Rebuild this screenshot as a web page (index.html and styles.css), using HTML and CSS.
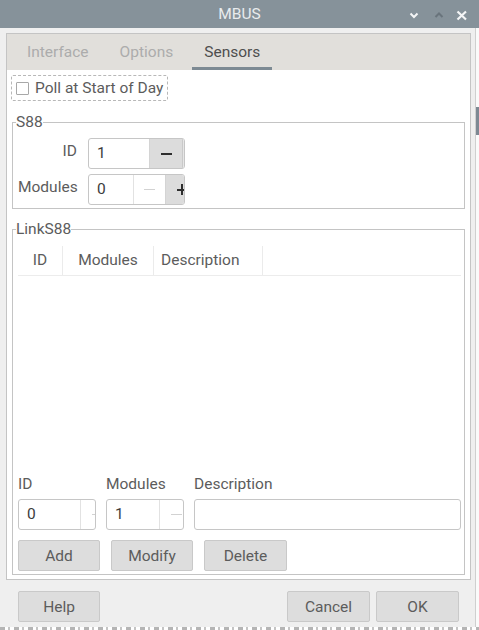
FILE: index.html
```html
<!DOCTYPE html>
<html>
<head>
<meta charset="utf-8">
<link rel="stylesheet" href="styles.css">
</head>
<body>
<div class="titlebar">
  <span></span>
  <span class="title">MBUS</span>
  <svg class="wm" width="79" height="28" viewBox="0 0 79 28">
    <path d="M10.5 13.5 l3.5 3.5 l3.5 -3.5" fill="none" stroke="#f4f5f6" stroke-width="2"/>
    <path d="M35.5 17 l3.5 -3.5 l3.5 3.5" fill="none" stroke="#69747c" stroke-width="2"/>
    <path d="M57.5 11.5 l8.5 8 M66 11.5 l-8.5 8" fill="none" stroke="#f4f5f6" stroke-width="2.2"/>
  </svg>
</div>
<div class="main">
  <div class="dialog">
    <div class="notebook">
      <div class="tabs">
        <div class="tab">Interface</div>
        <div class="tab">Options</div>
        <div class="tab active">Sensors</div>
      </div>
      <div class="page">
        <label class="check"><span class="box"></span>Poll at Start of Day</label>
        <div class="group s88">
          <span class="gtitle">S88</span>
          <div class="form">
            <span class="lbl">ID</span>
            <div class="spin">
              <span class="val w61">1</span>
              <span class="btn on"><i class="minus"></i></span>
              <span class="btn stub"></span>
            </div>
            <span class="lbl">Modules</span>
            <div class="spin">
              <span class="val w45">0</span>
              <span class="btn off w32"><i class="minus"></i></span>
              <span class="btn on"><i class="plus"></i></span>
            </div>
          </div>
        </div>
        <div class="group link">
          <span class="gtitle">LinkS88</span>
          <div class="table">
            <div class="thead">
              <div class="th c1">ID</div>
              <div class="th c2">Modules</div>
              <div class="th c3">Description</div>
            </div>
            <div class="tbody"></div>
          </div>
          <div class="fields">
            <span class="flbl">ID</span>
            <span class="flbl">Modules</span>
            <span class="flbl">Description</span>
            <div class="spin">
              <span class="val w62">0</span>
              <span class="btn off"><i class="minus"></i></span>
            </div>
            <div class="spin">
              <span class="val w53">1</span>
              <span class="btn off"><i class="minus"></i></span>
            </div>
            <div class="entry"></div>
          </div>
          <div class="actions">
            <button class="pbtn w82">Add</button>
            <button class="pbtn w82">Modify</button>
            <button class="pbtn w83">Delete</button>
          </div>
        </div>
      </div>
    </div>
    <div class="footer">
      <button class="pbtn w82">Help</button>
      <span class="spacer"></span>
      <button class="pbtn w83">Cancel</button>
      <button class="pbtn w83">OK</button>
    </div>
  </div>
  <div class="side"></div>
</div>
<div class="bottom"></div>
</body>
</html>
```
FILE: styles.css
```css
* { box-sizing: border-box; }
html, body { margin: 0; padding: 0; }
body {
  width: 479px;
  height: 630px;
  overflow: hidden;
  background: #ffffff;
  font-family: Roboto, "Liberation Sans", sans-serif;
  font-size: 15.5px;
  color: #5c5c5c;
}
.titlebar {
  height: 28px;
  background: #86929a;
  display: grid;
  grid-template-columns: 1fr auto 1fr;
  align-items: center;
}
.title {
  color: #e8ebed;
  line-height: 28px;
  font-size: 15.5px;
}
.wm { justify-self: end; display: block; }
.main {
  height: 599px;
  display: flex;
}
.dialog {
  width: 476px;
  background: #efefef;
  border-right: 1px solid #cfcfcf;
  padding: 5px 0 0 6px;
  display: flex;
  flex-direction: column;
}
.side {
  flex: 1;
  background: linear-gradient(to bottom, #fafafa 0 79px, #7d8993 79px 107px, #fafafa 107px);
}
.bottom {
  height: 3px;
  background: repeating-linear-gradient(90deg, #6a6a6a 0 5px, #ffffff 5px 8px, #8a8a8a 8px 10px, #ffffff 10px 14px);
  opacity: 0.5;
}
.notebook {
  width: 465px;
  height: 547px;
  border: 1px solid #c4c4c4;
  display: flex;
  flex-direction: column;
}
.tabs {
  height: 36px;
  background: #e1dfdb;
  display: flex;
  padding-left: 8px;
  gap: 7px;
}
.tab {
  padding: 0 12px;
  line-height: 36px;
  color: #acacac;
}
.tab.active {
  color: #4e4e4e;
  box-shadow: inset 0 -3px 0 #7d8a93;
}
.page {
  flex: 1;
  background: #ffffff;
  padding: 5px 5px 4px 5px;
  display: flex;
  flex-direction: column;
  align-items: stretch;
}
.check {
  align-self: flex-start;
  margin-left: -1px;
  height: 26px;
  display: inline-flex;
  align-items: center;
  padding: 0 4px;
  border: 1px dashed #b8b8b8;
  border-radius: 2px;
}
.box {
  width: 13px;
  height: 13px;
  border: 1px solid #a8a8a8;
  border-radius: 1px;
  background: #fff;
  margin-right: 6px;
}
.group {
  position: relative;
  border: 1px solid #c4c4c4;
}
.gtitle {
  position: absolute;
  left: 3px;
  top: -10px;
  line-height: 19px;
  background: #ffffff;
}
.s88 {
  margin-top: 21px;
  padding: 15px 0 3px 5px;
}
.form {
  display: grid;
  grid-template-columns: 59px 97px;
  column-gap: 11px;
  row-gap: 5px;
}
.lbl {
  text-align: right;
  line-height: 18px;
  padding-top: 4px;
}
.spin {
  display: flex;
  height: 31px;
  border: 1px solid #c6c6c6;
  border-radius: 3px;
  overflow: hidden;
  background: #fff;
}
.val {
  flex: none;
  padding-left: 8px;
  line-height: 29px;
  color: #3c3c3c;
}
.w61 { width: 60px; }
.w45 { width: 44px; }
.w62 { width: 61px; }
.w53 { width: 52px; }
.btn {
  flex: none;
  width: 33px;
  border-left: 1px solid #e2e2e2;
  display: flex;
  align-items: center;
  justify-content: center;
}
.btn.w32 { width: 32px; }
.btn.on { background: #dcdcdc; color: #2e2e2e; border-left-color: #d4d4d4; }
.btn.off { color: #d2d2d2; }
.btn.stub { background: #e6e6e6; border-left-color: #c9c9c9; }
.minus {
  display: block;
  width: 11px;
  height: 2px;
  background: currentColor;
}
.btn.off .minus { height: 1px; }
.plus {
  display: block;
  position: relative;
  width: 11px;
  height: 2px;
  background: currentColor;
}
.plus::after {
  content: "";
  position: absolute;
  left: 4.5px;
  top: -4.5px;
  width: 2px;
  height: 11px;
  background: currentColor;
}
.link {
  flex: 1;
  margin-top: 20px;
  padding: 16px 3px 3px 5px;
  display: flex;
  flex-direction: column;
}
.table {
  flex: 1;
  display: flex;
  flex-direction: column;
}
.thead {
  display: flex;
  height: 30px;
  border-bottom: 1px solid #ececec;
}
.th {
  line-height: 29px;
  border-right: 1px solid #ebebeb;
  white-space: nowrap;
}
.c1 { width: 45px; text-align: center; }
.c2 { width: 91px; text-align: center; }
.c3 { width: 109px; padding-left: 7px; }
.tbody { flex: 1; }
.fields {
  display: grid;
  grid-template-columns: 78px 78px 1fr;
  column-gap: 10px;
  row-gap: 6px;
}
.flbl { line-height: 18px; }
.entry {
  height: 31px;
  border: 1px solid #c6c6c6;
  border-radius: 3px;
  background: #fff;
}
.actions {
  display: flex;
  gap: 11px;
  margin-top: 10px;
}
.pbtn {
  font: inherit;
  height: 31px;
  padding: 0;
  background: #dddddd;
  border: 1px solid #c9c9c9;
  border-radius: 2px;
  color: #5c5c5c;
}
.w82 { width: 82px; }
.w83 { width: 83px; }
.footer {
  display: flex;
  gap: 6px;
  margin-top: 11px;
  padding: 0 16px 0 12px;
}
.spacer { flex: 1; }
```
